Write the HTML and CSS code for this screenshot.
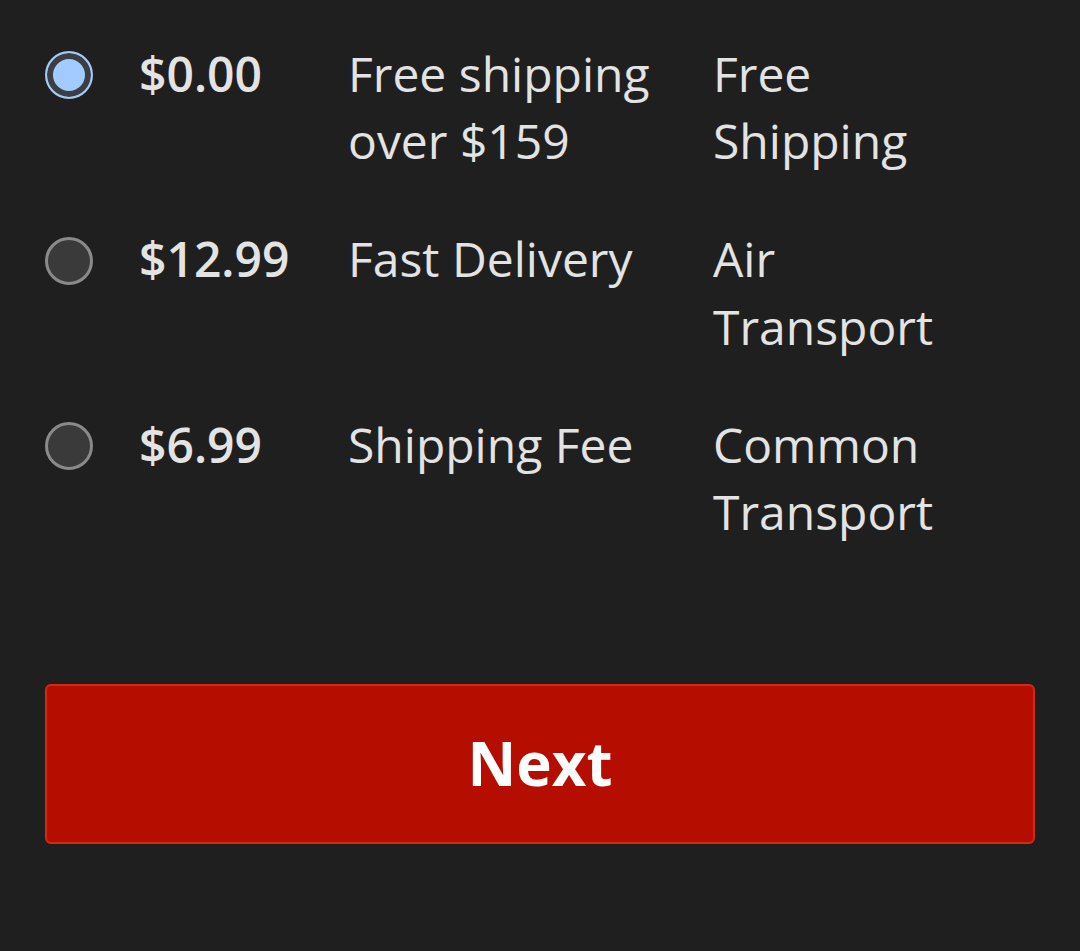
FILE: index.html
```html
<!DOCTYPE html>
<html>
<head>
<meta charset="utf-8">
<link rel="stylesheet" href="styles.css">
</head>
<body>
<div class="page">
  <div class="options">
    <div class="option">
      <div class="radio-cell"><span class="radio selected"></span></div>
      <div class="price">$0.00</div>
      <div class="desc">Free shipping over $159</div>
      <div class="method">Free Shipping</div>
    </div>
    <div class="option">
      <div class="radio-cell"><span class="radio"></span></div>
      <div class="price">$12.99</div>
      <div class="desc">Fast Delivery</div>
      <div class="method">Air Transport</div>
    </div>
    <div class="option">
      <div class="radio-cell"><span class="radio"></span></div>
      <div class="price">$6.99</div>
      <div class="desc">Shipping Fee</div>
      <div class="method">Common Transport</div>
    </div>
  </div>
  <button class="next">Next</button>
</div>
</body>
</html>
```
FILE: styles.css
```css
html, body {
  margin: 0;
  padding: 0;
  background: #1f1f1f;
}
body {
  font-family: "Open Sans", "Noto Sans", sans-serif;
  color: #e3e3e3;
  width: 1080px;
  height: 951px;
  overflow: hidden;
}
.page {
  padding: 40px 46px 0 45px;
}
.options {
  display: flex;
  flex-direction: column;
  gap: 51px;
}
.option {
  display: grid;
  grid-template-columns: 94px 209px 365px 1fr;
  font-size: 48px;
  line-height: 67.2px;
}
.radio-cell {
  box-sizing: border-box;
  height: 67.2px;
  padding-top: 3px;
  display: flex;
  align-items: center;
}
.radio {
  box-sizing: border-box;
  width: 48px;
  height: 48px;
  border-radius: 50%;
  border: 3px solid #8a8a8a;
  background: #3a3a3a;
}
.radio.selected {
  border: 2px solid #a6c8f5;
  background: #a3cbff;
  box-shadow: inset 0 0 0 6px #3b3f44;
}
.price {
  font-weight: 600;
}
.desc, .method {
  font-weight: 400;
}
.method {
  width: 240px;
}
.next {
  display: block;
  box-sizing: border-box;
  margin-top: 139px;
  width: 990px;
  height: 160px;
  background: #b50e00;
  border: 2px solid #d32a18;
  border-radius: 6px;
  color: #ffffff;
  font-family: "Open Sans", "Noto Sans", sans-serif;
  font-weight: 700;
  font-size: 60px;
  padding: 0 0 2px 0;
}
```
